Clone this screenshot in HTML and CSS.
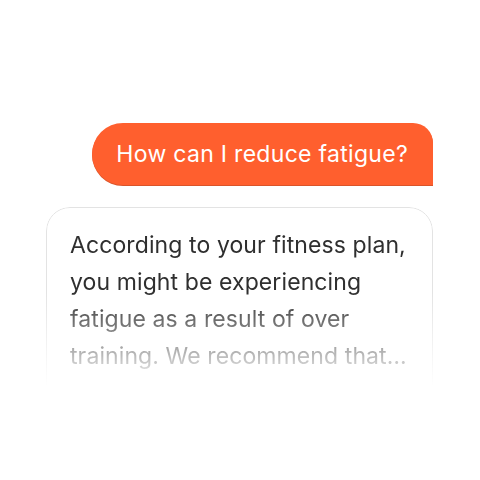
FILE: index.html
```html
<!DOCTYPE html>
<html>
<head>
<meta charset="utf-8">
<link rel="stylesheet" href="styles.css">
</head>
<body>
<main class="chat">
  <div class="bubble">How can I reduce fatigue?</div>
  <div class="card">
    <p class="answer">According to your fitness plan, you might be experiencing fatigue as a result of over training. We recommend that…</p>
  </div>
</main>
</body>
</html>
```
FILE: styles.css
```css
html, body {
  margin: 0;
  padding: 0;
  background: #ffffff;
}
body {
  width: 480px;
  height: 480px;
  overflow: hidden;
  font-family: Inter, "Noto Sans", sans-serif;
}
.chat {
  display: flex;
  flex-direction: column;
  padding: 123px 47px 0 46px;
  gap: 22px;
}
.bubble {
  align-self: flex-end;
  background: #ff5f2e;
  color: #ffffff;
  font-size: 23px;
  line-height: 28px;
  letter-spacing: 0.3px;
  padding: 17px 25px 17px 24px;
  border-radius: 31px 20px 0 31px;
  box-shadow: 0 1px 0 #d9542a;
}
.card {
  border: 1px solid #e3e3e3;
  border-radius: 24px;
  height: 200px;
  padding: 19px 16px 0 23px;
  -webkit-mask-image: linear-gradient(to bottom, #000 0, #000 85px, transparent 180px);
  mask-image: linear-gradient(to bottom, #000 0, #000 85px, transparent 180px);
}
.answer {
  margin: 0;
  font-size: 23px;
  line-height: 37px;
  letter-spacing: 0.1px;
  color: #2f2f2f;
}
```
